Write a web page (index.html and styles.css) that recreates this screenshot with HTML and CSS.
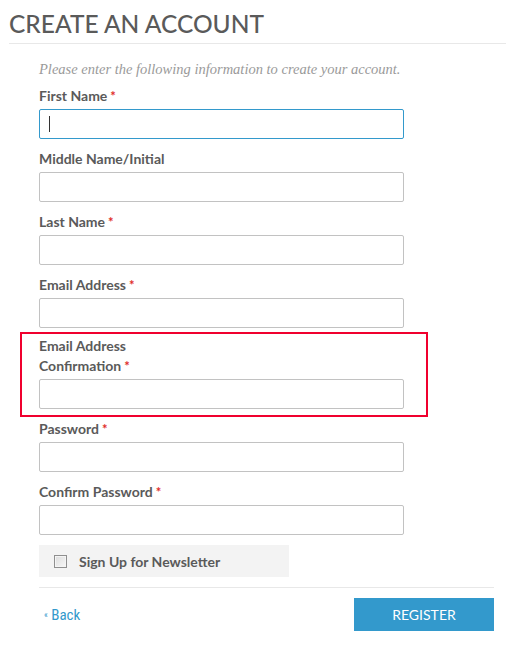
FILE: index.html
```html
<!DOCTYPE html>
<html lang="en">
<head>
    <meta charset="UTF-8">
    <meta name="viewport" content="width=device-width, initial-scale=1.0">
    <title>Create an Account</title>
    <link rel="stylesheet" href="styles.css">
</head>
<body>
    <div class="page">
        <h1 class="page-title">Create an Account</h1>
        <form class="account-form">
            <p class="intro">Please enter the following information to create your account.</p>

            <div class="field">
                <label for="firstname">First Name<span class="req">*</span></label>
                <div class="control has-caret">
                    <input type="text" id="firstname" class="input is-focused">
                </div>
            </div>
            <div class="field">
                <label for="middlename">Middle Name/Initial</label>
                <input type="text" id="middlename" class="input">
            </div>
            <div class="field">
                <label for="lastname">Last Name<span class="req">*</span></label>
                <input type="text" id="lastname" class="input">
            </div>
            <div class="field">
                <label for="email">Email Address<span class="req">*</span></label>
                <input type="email" id="email" class="input">
            </div>
            <div class="field field-flagged">
                <label for="email-confirm">Email Address<br>Confirmation<span class="req">*</span></label>
                <input type="email" id="email-confirm" class="input">
            </div>
            <div class="field field-after-flag">
                <label for="password">Password<span class="req">*</span></label>
                <input type="password" id="password" class="input">
            </div>
            <div class="field">
                <label for="confirmation">Confirm Password<span class="req">*</span></label>
                <input type="password" id="confirmation" class="input">
            </div>

            <label class="newsletter">
                <input type="checkbox" class="check">
                <span>Sign Up for Newsletter</span>
            </label>

            <div class="actions">
                <a href="#" class="back"><span class="back-arrow">&laquo;</span> Back</a>
                <button type="button" class="register">Register</button>
            </div>
        </form>
    </div>
</body>
</html>
```

FILE: styles.css
```css
body {
    margin: 0;
    background: #ffffff;
    font-family: Lato, "Open Sans", sans-serif;
    color: #555555;
}
.page-title {
    margin: 0 0 0 9px;
    padding: 9px 0 4px;
    font-size: 24.5px;
    line-height: 30px;
    font-weight: 500;
    text-transform: uppercase;
    color: #5a5a5a;
    border-bottom: 1px solid #e8e8e8;
}
.account-form {
    padding: 15px 0 0 39px;
}
.intro {
    margin: 0 0 7px;
    font-family: "Liberation Serif", serif;
    font-style: italic;
    font-size: 14.5px;
    line-height: 20px;
    color: #9a9a9a;
}
.field {
    width: 365px;
    margin-top: 10px;
}
.field:first-of-type {
    margin-top: 0;
}
.field label {
    display: block;
    margin-bottom: 3px;
    font-size: 14px;
    line-height: 20px;
    font-weight: 700;
    color: #5a5a5a;
}
.req {
    margin-left: 3px;
    font-size: 13px;
    color: #e02b27;
}
.input {
    display: block;
    box-sizing: border-box;
    width: 365px;
    height: 30px;
    margin: 0;
    border: 1px solid #c2c2c2;
    border-radius: 2px;
    background: #ffffff;
    font: inherit;
}
.input.is-focused {
    border-color: #3399cc;
    outline: none;
}
.control {
    position: relative;
}
.has-caret::after {
    content: "";
    position: absolute;
    left: 10px;
    top: 7px;
    width: 1px;
    height: 16px;
    background: #333333;
}
.field-flagged {
    width: 365px;
    margin: 4px -24px 0 -19px;
    padding: 2px 22px 6px 17px;
    border: 2px solid #f0002e;
}
.field-after-flag {
    margin-top: 2px;
}
.newsletter {
    display: flex;
    align-items: center;
    gap: 12px;
    box-sizing: border-box;
    width: 250px;
    height: 32px;
    margin-top: 10px;
    padding-left: 15px;
    background: #f3f3f3;
    font-size: 14px;
    font-weight: 700;
    color: #5a5a5a;
}
.check {
    appearance: none;
    box-sizing: border-box;
    width: 13px;
    height: 13px;
    margin: 0;
    border: 1px solid #8f8f8f;
    background: linear-gradient(135deg, #dcdcdc, #f7f7f7);
    box-shadow: inset 0 0 0 1px #f4f4f4;
}
.actions {
    display: flex;
    justify-content: space-between;
    align-items: center;
    width: 455px;
    margin-top: 10px;
    padding-top: 10px;
    border-top: 1px solid #e8e8e8;
}
.back {
    padding-left: 5px;
    font-family: "Liberation Sans Narrow", "Roboto Condensed", Roboto, sans-serif;
    font-size: 15px;
    color: #3399cc;
    text-decoration: none;
}
.back-arrow {
    font-size: 9px;
    vertical-align: 2px;
}
.register {
    width: 140px;
    height: 33px;
    border: none;
    background: #3399cc;
    color: #ffffff;
    font-family: Lato, sans-serif;
    font-size: 14px;
    text-transform: uppercase;
    cursor: pointer;
}
```
